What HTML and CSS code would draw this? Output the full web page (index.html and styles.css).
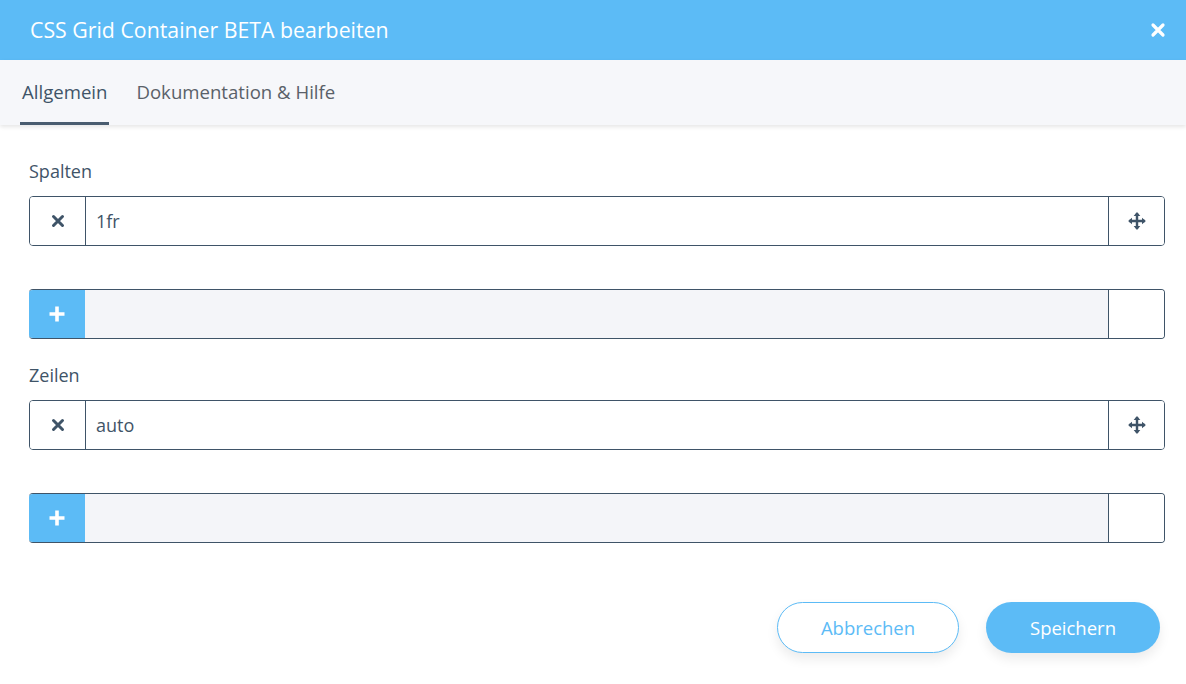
FILE: index.html
```html
<!DOCTYPE html>
<html lang="de">
    <head>
        <meta charset="UTF-8" />
        <meta name="viewport" content="width=device-width, initial-scale=1.0" />
        <link rel="stylesheet" href="styles.css">
    </head>
    <body>
        <div class="modal">
            <div class="modal-header">
                <div class="modal-title">CSS Grid Container BETA bearbeiten</div>
                <svg class="close" width="16" height="16" viewBox="0 0 16 16">
                    <path d="M3 3 L13 13 M13 3 L3 13" stroke="#fff" stroke-width="3.2" stroke-linecap="round" />
                </svg>
            </div>
            <div class="tabs">
                <div class="tab active">Allgemein</div>
                <div class="tab">Dokumentation &amp; Hilfe</div>
            </div>

            <div class="content">
                <div class="label">Spalten</div>
                <div class="row">
                    <div class="cell remove">
                        <svg width="14" height="14" viewBox="0 0 14 14"><path d="M2.5 2.5 L11.5 11.5 M11.5 2.5 L2.5 11.5" stroke="#3f5468" stroke-width="3" stroke-linecap="round" /></svg>
                    </div>
                    <div class="value">1fr</div>
                    <div class="cell handle">
                        <svg width="20" height="20" viewBox="0 0 18 18"><path d="M9 2 L9 16 M2 9 L16 9" stroke="#3f5468" stroke-width="2.2" /><path d="M9 1 L12 4.5 L6 4.5 Z M9 17 L12 13.5 L6 13.5 Z M1 9 L4.5 6 L4.5 12 Z M17 9 L13.5 6 L13.5 12 Z" fill="#3f5468" /></svg>
                    </div>
                </div>
                <div class="row add">
                    <div class="cell plus">
                        <svg width="18" height="18" viewBox="0 0 18 18"><path d="M9 1.5 L9 16.5 M1.5 9 L16.5 9" stroke="#fff" stroke-width="3.6" /></svg>
                    </div>
                    <div class="value empty"></div>
                    <div class="cell"></div>
                </div>

                <div class="label">Zeilen</div>
                <div class="row">
                    <div class="cell remove">
                        <svg width="14" height="14" viewBox="0 0 14 14"><path d="M2.5 2.5 L11.5 11.5 M11.5 2.5 L2.5 11.5" stroke="#3f5468" stroke-width="3" stroke-linecap="round" /></svg>
                    </div>
                    <div class="value">auto</div>
                    <div class="cell handle">
                        <svg width="20" height="20" viewBox="0 0 18 18"><path d="M9 2 L9 16 M2 9 L16 9" stroke="#3f5468" stroke-width="2.2" /><path d="M9 1 L12 4.5 L6 4.5 Z M9 17 L12 13.5 L6 13.5 Z M1 9 L4.5 6 L4.5 12 Z M17 9 L13.5 6 L13.5 12 Z" fill="#3f5468" /></svg>
                    </div>
                </div>
                <div class="row add">
                    <div class="cell plus">
                        <svg width="18" height="18" viewBox="0 0 18 18"><path d="M9 1.5 L9 16.5 M1.5 9 L16.5 9" stroke="#fff" stroke-width="3.6" /></svg>
                    </div>
                    <div class="value empty"></div>
                    <div class="cell"></div>
                </div>
            </div>

            <div class="footer">
                <button class="btn btn-cancel">Abbrechen</button>
                <button class="btn btn-save">Speichern</button>
            </div>
        </div>
    </body>
</html>
```

FILE: styles.css
```css
body {
    margin: 0;
    padding: 0;
    font-family: "Open Sans", "Noto Sans", sans-serif;
    color: #3f5468;
    background: #fff;
}
.modal {
    width: 1186px;
    height: 684px;
    overflow: hidden;
}
.modal-header {
    height: 60px;
    background-color: #5cbbf6;
    display: flex;
    align-items: center;
    justify-content: space-between;
    padding: 0 20px 0 30px;
}
.modal-title {
    color: #fff;
    font-size: 21.3px;
    margin-top: -2px;
}
.tabs {
    height: 65px;
    background-color: #f6f7fa;
    display: flex;
    align-items: stretch;
    padding-left: 20px;
    gap: 25px;
    box-shadow: 0 2px 4px rgba(0, 0, 0, 0.1);
    position: relative;
}
.tab {
    font-size: 18.6px;
    color: #5a6169;
    padding: 0 2px;
    display: flex;
    align-items: center;
    margin-top: -2px;
    border-bottom: 3px solid transparent;
    padding-top: 2px;
}
.tab.active {
    color: #3f5468;
    border-bottom-color: #4a5d70;
}
.content {
    padding: 34px 21px 0 29px;
}
.label {
    font-size: 18px;
    line-height: 24px;
    margin-bottom: 13px;
}
.row {
    display: flex;
    height: 50px;
    box-sizing: border-box;
    border: 1px solid #3f5468;
    border-radius: 4px;
    overflow: hidden;
    margin-bottom: 43px;
}
.row.add {
    margin-bottom: 24px;
    border-left: none;
}
.cell {
    width: 55px;
    flex: none;
    display: flex;
    align-items: center;
    justify-content: center;
    background: #fff;
}
.cell.remove {
    border-right: 1px solid #3f5468;
}
.cell.handle {
    border-left: 1px solid #3f5468;
}
.row.add .cell:last-child {
    border-left: 1px solid #3f5468;
}
.cell.plus {
    width: 56px;
    background-color: #5cbbf6;
}
.value {
    flex: 1;
    display: flex;
    align-items: center;
    padding-left: 10px;
    font-size: 18px;
    color: #3f5468;
}
.value.empty {
    background-color: #f4f5f9;
}
.footer {
    display: flex;
    justify-content: flex-end;
    gap: 27px;
    padding: 35px 26px 0 0;
}
.btn {
    height: 51px;
    border-radius: 26px;
    font-family: "Open Sans", "Noto Sans", sans-serif;
    font-size: 18.5px;
    cursor: pointer;
    box-shadow: 0 6px 12px rgba(0, 0, 0, 0.08);
}
.btn-cancel {
    width: 182px;
    background: #fff;
    color: #5cbbf6;
    border: 1px solid #5cbbf6;
}
.btn-save {
    width: 174px;
    background: #5cbbf6;
    color: #fff;
    border: none;
}
```
